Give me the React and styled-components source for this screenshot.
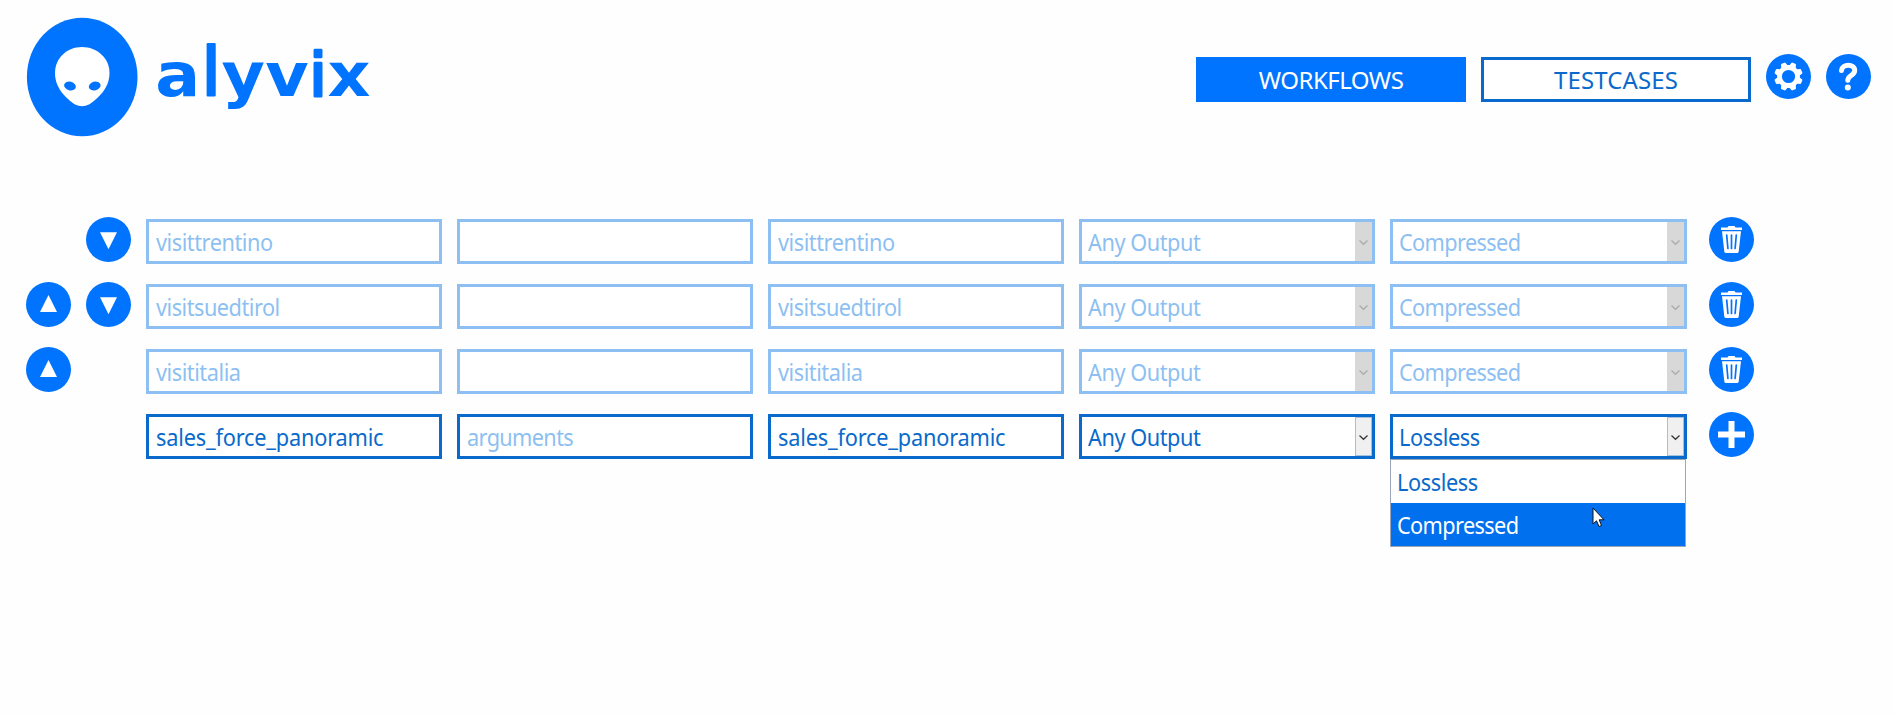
import React from "react";
import styled, { createGlobalStyle } from "styled-components";

const BLUE = "#0073ff";
const INK = "#0a6acb";
const PALE = "#8dbff2";

const GlobalStyle = createGlobalStyle`
  * { box-sizing: border-box; }
  body { margin: 0; background: #fff; }
`;

const Page = styled.main`
  width: 1893px;
  height: 715px;
  overflow: hidden;
  background: #fefefe;
  font-family: "Noto Sans", Tahoma, sans-serif;
  font-size: 24px;
`;

const Header = styled.header`
  display: flex;
  justify-content: space-between;
  align-items: flex-start;
  height: 217px;
  padding: 10px 22px 0 20px;
`;

const Nav = styled.nav`
  display: flex;
  gap: 15px;
  padding-top: 44px;
`;

const Tab = styled.button`
  width: 270px;
  height: 45px;
  margin-top: 3px;
  padding: 0;
  border: 3px solid ${(p) => (p.$active ? BLUE : INK)};
  background: ${(p) => (p.$active ? BLUE : "#fff")};
  color: ${(p) => (p.$active ? "#fff" : INK)};
  font: inherit;
  line-height: 39px;
  letter-spacing: ${(p) => p.$tracking};
`;

const Round = styled.button`
  display: block;
  flex: none;
  width: 45px;
  height: 45px;
  padding: 0;
  border: 0;
  border-radius: 50%;
  background: ${BLUE};
  visibility: ${(p) => (p.$hidden ? "hidden" : "visible")};

  svg { display: block; }
`;

const List = styled.section`
  display: flex;
  flex-direction: column;
  gap: 18px;
  padding-left: 26px;
`;

const Row = styled.div`
  display: flex;
  gap: 15px;
  height: 47px;
`;

const Field = styled.div`
  position: relative;
  display: flex;
  flex: none;
  justify-content: space-between;
  width: ${(p) => p.$width || 296}px;
  height: 45px;
  margin-top: 2px;
  padding-left: ${(p) => (p.$select ? 6 : 7)}px;
  border: 3px solid ${(p) => (p.$active ? INK : PALE)};
  background: #fff;
  color: ${(p) => (p.$active && !p.$placeholder ? INK : PALE)};
  line-height: 39px;
`;

const Label = styled.span`
  display: inline-block;
  white-space: pre;
  letter-spacing: ${(p) => p.$tracking || "0px"};
  transform: scaleX(0.905);
  transform-origin: left center;
`;

const Arrow = styled.span`
  width: 17px;
  height: 39px;
  border: 1px solid ${(p) => (p.$active ? "#a5bfdd" : "#d8d8d8")};
  background: ${(p) => (p.$active ? "#f0f0f0" : "#d8d8d8")};

  svg { display: block; margin: 16px 0 0 3px; }
`;

const Action = styled.div`
  margin-left: 7px;
`;

const Menu = styled.div`
  position: absolute;
  top: 42px;
  left: -3px;
  width: 296px;
  height: 88px;
  border: 1px solid #9aa7b8;
  background: #fff;
  z-index: 1;
`;

const Option = styled.div`
  height: 43px;
  padding-left: 6px;
  background: ${(p) => (p.$active ? "#0070ee" : "#fff")};
  color: ${(p) => (p.$active ? "#fff" : INK)};
  line-height: 44px;
`;

const Pointer = styled.svg`
  position: absolute;
  left: 201px;
  top: 47px;
`;

const TRACKING = {
  WORKFLOWS: "-0.5px",
  TESTCASES: "0.1px",
  visittrentino: "-0.5px",
  visitsuedtirol: "-0.55px",
  visititalia: "-0.5px",
  sales_force_panoramic: "-0.2px",
  arguments: "-0.72px",
  "Any Output": "-0.5px",
  Compressed: "-0.7px",
  Lossless: "-0.45px",
};

const Logo = () => (
  <svg width="360" height="132" viewBox="20 10 360 132">
    <ellipse cx="82.2" cy="77" rx="55.3" ry="59.3" fill={BLUE} />
    <path
      d="M82 47C97 47 109.500 58 109.500 73C109.500 89 97 99 89 104.500Q82 108 75 104.500C67 99 55 89 55 73C55 58 67 47 82 47Z"
      fill="#fff"
    />
    <ellipse cx="70" cy="86" rx="6" ry="4.300" transform="rotate(15 70 86)" fill={BLUE} />
    <ellipse cx="94.700" cy="86" rx="6" ry="4.300" transform="rotate(-15 94.700 86)" fill={BLUE} />
    <text
      transform="scale(1.17 1.06)"
      y="90.500"
      fontFamily="DejaVu Sans, sans-serif"
      fontWeight="700"
      fontSize="57"
      fill={BLUE}
      stroke={BLUE}
      strokeWidth="0"
      strokeLinejoin="round"
    >
      <tspan x="132.800">a</tspan>
      <tspan x="171.500" fontSize="64" fontWeight="400" strokeWidth="2">l</tspan>
      <tspan x="189.400">y</tspan>
      <tspan x="226.700">v</tspan>
      <tspan x="264" fontWeight="400" strokeWidth="2.500">i</tspan>
      <tspan x="280">x</tspan>
    </text>
  </svg>
);

const TEETH = [22.5, 67.5, 112.5, 157.5, 202.5, 247.5, 292.5, 337.5];

const Gear = () => (
  <svg width="45" height="45" viewBox="0 0 45 45">
    <circle cx="22.500" cy="22.500" r="9" fill="none" stroke="#fff" strokeWidth="4.800" />
    {TEETH.map((a) => (
      <path key={a} d="M18.800 13L20 9Q20.200 8.200 21 8.200H24Q24.800 8.200 25 9L26.200 13Z" fill="#fff" transform={`rotate(${a} 22.500 22.500)`} />
    ))}
  </svg>
);

const Help = () => (
  <svg width="45" height="45" viewBox="0 0 45 45" fill="none" stroke="#fff">
    <path d="M15.500 16.500C16 9.500 28.700 9.500 28.700 16.500C28.700 21.500 21.800 21.500 21.800 26.200" strokeWidth="5" strokeLinecap="round" />
    <circle cx="21.800" cy="33.500" r="3" fill="#fff" stroke="none" />
  </svg>
);

const Triangle = ({ up }) => (
  <svg width="45" height="45" viewBox="0 0 45 45" fill="#fff">
    <path d={up ? "M22.500 13L31 30H14Z" : "M14 15.300H31L22.500 32.300Z"} />
  </svg>
);

const Trash = () => (
  <svg width="45" height="45" viewBox="0 0 45 45">
    <path d="M12 10.500H18.500L19.500 9H25.500L26.500 10.500H33V13H12Z" fill="#fff" />
    <path d="M13 14.300H32L29.700 34.500Q29.500 36 28 36H17Q15.500 36 15.300 34.500Z" fill="#fff" />
    <path d="M17.700 18L18.900 31.500M22.500 18V31.500M27.300 18L26.100 31.500" stroke={BLUE} strokeWidth="1.700" strokeLinecap="round" />
  </svg>
);

const Plus = () => (
  <svg width="45" height="45" viewBox="0 0 45 45">
    <path d="M22.500 9V36M9 22.500H36" stroke="#fff" strokeWidth="6" />
  </svg>
);

const Select = ({ value, active, width, children }) => (
  <Field $select $active={active} $width={width}>
    <Label $tracking={TRACKING[value]}>{value}</Label>
    <Arrow $active={active}>
      <svg width="9" height="7" viewBox="0 0 9 7">
        <path d="M0.500 1.500L4.500 5.300L8.500 1.500" fill="none" stroke={active ? "#333" : "#aaa"} strokeWidth="1.200" />
      </svg>
    </Arrow>
    {children}
  </Field>
);

const ROWS = [
  { name: "visittrentino", down: true },
  { name: "visitsuedtirol", up: true, down: true },
  { name: "visititalia", up: true },
  { name: "sales_force_panoramic", active: true },
];

export default function App() {
  return (
    <Page>
      <GlobalStyle />
      <Header>
        <Logo />
        <Nav>
          <Tab $active $tracking={TRACKING.WORKFLOWS}>WORKFLOWS</Tab>
          <Tab $tracking={TRACKING.TESTCASES}>TESTCASES</Tab>
          <Round aria-label="Settings"><Gear /></Round>
          <Round aria-label="Help"><Help /></Round>
        </Nav>
      </Header>
      <List>
        {ROWS.map(({ name, up, down, active }) => (
          <Row key={name}>
            <Round $hidden={!up}><Triangle up /></Round>
            <Round $hidden={!down}><Triangle /></Round>
            <Field $active={active}><Label $tracking={TRACKING[name]}>{name}</Label></Field>
            <Field $active={active} $placeholder>
              <Label $tracking={TRACKING.arguments}>{active ? "arguments" : ""}</Label>
            </Field>
            <Field $active={active}><Label $tracking={TRACKING[name]}>{name}</Label></Field>
            <Select value="Any Output" active={active} />
            <Select value={active ? "Lossless" : "Compressed"} active={active} width={297}>
              {active && (
                <Menu>
                  <Option><Label $tracking={TRACKING.Lossless}>Lossless</Label></Option>
                  <Option $active><Label $tracking={TRACKING.Compressed}>Compressed</Label></Option>
                  <Pointer width="14" height="21" viewBox="0 0 14 21">
                    <path d="M1 1V17L4.500 13.800L7 19.500L9.500 18.400L7.200 12.800H12Z" fill="#fff" stroke="#111" strokeWidth="1" />
                  </Pointer>
                </Menu>
              )}
            </Select>
            <Action><Round>{active ? <Plus /> : <Trash />}</Round></Action>
          </Row>
        ))}
      </List>
    </Page>
  );
}
